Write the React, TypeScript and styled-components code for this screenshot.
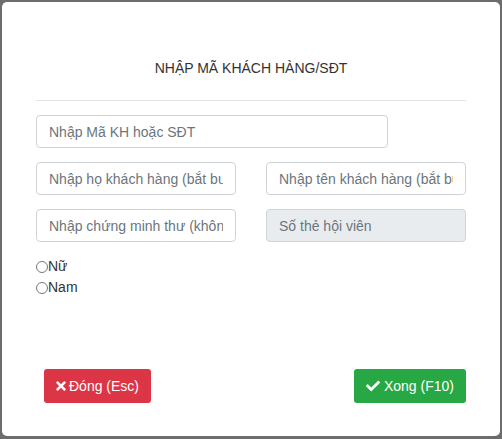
import React from "react";
import styled, { createGlobalStyle } from "styled-components";
import { FaTimes, FaCheck } from "react-icons/fa";

const Global = createGlobalStyle`
  html, body { margin: 0; padding: 0; }
  body {
    background: #6d6d6d;
    font-family: "Liberation Sans", Arial, sans-serif;
    color: #333;
  }
  * { box-sizing: border-box; }
`;

const Backdrop = styled.div`
  width: 502px;
  height: 439px;
  padding: 2px 2px 3px 2px;
`;

const Modal = styled.div`
  height: 100%;
  background: #fff;
  border-radius: 5px;
  display: flex;
  flex-direction: column;
  padding: 0 34px 33px 34px;
`;

const Header = styled.div`
  padding-top: 56px;
  padding-bottom: 22px;
  border-bottom: 1px solid #e5e5e5;
  text-align: center;
`;

const Title = styled.h4`
  margin: 0;
  font-size: 14px;
  line-height: 20px;
  font-weight: 400;
  color: #333;
`;

const Form = styled.div`
  display: flex;
  flex-direction: column;
  gap: 14px;
  padding-top: 14px;
`;

const Row = styled.div`
  display: grid;
  grid-template-columns: 200px 200px;
  column-gap: 30px;
`;

const Input = styled.input<{ $w?: number }>`
  width: ${(p) => (p.$w ? `${p.$w}px` : "100%")};
  height: 33px;
  padding: 0 12px;
  border: 1px solid #ced4da;
  border-radius: 4px;
  font-family: "Liberation Sans", Arial, sans-serif;
  font-size: 14px;
  color: #495057;
  background: #fff;
  outline: none;
  &::placeholder { color: #6c757d; opacity: 1; }
  &:disabled { background: #e9ecef; }
`;

const Radios = styled.div`
  display: flex;
  flex-direction: column;
`;

const RadioLabel = styled.label`
  display: flex;
  align-items: center;
  font-size: 14px;
  line-height: 21px;
  color: #333;
`;

const Radio = styled.input`
  margin: 0;
  width: 12px;
  height: 12px;
`;

const Footer = styled.div`
  margin-top: auto;
  display: flex;
  justify-content: space-between;
  padding-left: 8px;
`;

const Button = styled.button<{ $variant: "danger" | "success" }>`
  display: inline-flex;
  align-items: center;
  gap: 4px;
  height: 34px;
  padding: 0 12px;
  border: none;
  border-radius: 3px;
  background: ${(p) => (p.$variant === "danger" ? "#dc3545" : "#28a745")};
  color: #fff;
  font-family: "Liberation Sans", Arial, sans-serif;
  font-size: 14px;
  cursor: pointer;
  svg { font-size: 14px; }
`;

const CloseIcon = styled(FaTimes)`
  margin: 0 -3px 0 -2px;
`;

export default function App() {
  return (
    <>
      <Global />
      <Backdrop>
        <Modal>
          <Header>
            <Title>NHẬP MÃ KHÁCH HÀNG/SĐT</Title>
          </Header>
          <Form>
            <Input $w={352} placeholder="Nhập Mã KH hoặc SĐT" />
            <Row>
              <Input placeholder="Nhập họ khách hàng (bắt buộc)" />
              <Input placeholder="Nhập tên khách hàng (bắt buộc)" />
            </Row>
            <Row>
              <Input placeholder="Nhập chứng minh thư (không bắt buộc)" />
              <Input placeholder="Số thẻ hội viên" disabled />
            </Row>
            <Radios>
              <RadioLabel>
                <Radio type="radio" name="gender" />
                Nữ
              </RadioLabel>
              <RadioLabel>
                <Radio type="radio" name="gender" />
                Nam
              </RadioLabel>
            </Radios>
          </Form>
          <Footer>
            <Button $variant="danger">
              <CloseIcon />
              Đóng (Esc)
            </Button>
            <Button $variant="success">
              <FaCheck />
              Xong (F10)
            </Button>
          </Footer>
        </Modal>
      </Backdrop>
    </>
  );
}
